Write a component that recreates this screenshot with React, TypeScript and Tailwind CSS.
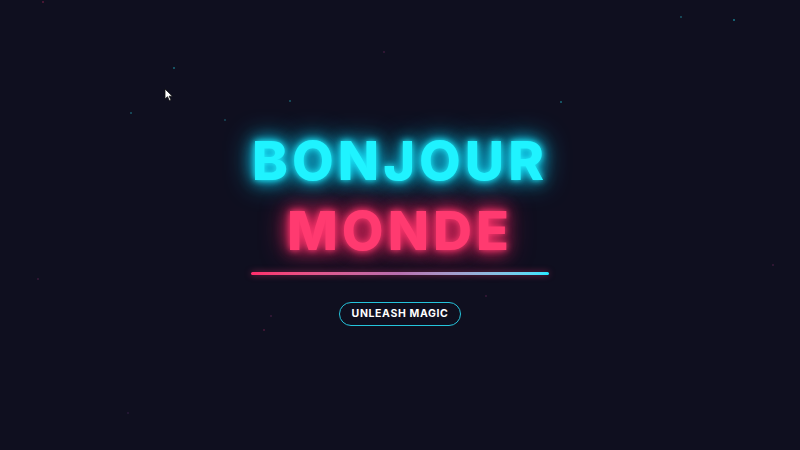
import React from 'react';

const stars = [
  { x: 42, y: 1, c: 'bg-[#5a1a3a]' },
  { x: 173, y: 67, c: 'bg-[#1a6a7a]' },
  { x: 130, y: 112, c: 'bg-[#1a5a6a]' },
  { x: 224, y: 119, c: 'bg-[#1a4a5a]' },
  { x: 289, y: 100, c: 'bg-[#1a5a6a]' },
  { x: 383, y: 51, c: 'bg-[#3a1a3a]' },
  { x: 560, y: 101, c: 'bg-[#1a6a7a]' },
  { x: 680, y: 16, c: 'bg-[#1a5a6a]' },
  { x: 733, y: 19, c: 'bg-[#1a7a8a]' },
  { x: 37, y: 278, c: 'bg-[#3a1a3a]' },
  { x: 270, y: 315, c: 'bg-[#3a1a3a]' },
  { x: 263, y: 329, c: 'bg-[#4a1a3a]' },
  { x: 485, y: 295, c: 'bg-[#3a1a3a]' },
  { x: 772, y: 264, c: 'bg-[#3a1a3a]' },
  { x: 127, y: 412, c: 'bg-[#2a1a3a]' },
];

export default function App() {
  return (
    <div className="relative w-[800px] h-[450px] overflow-hidden bg-[#0f0f1f] font-['Inter','Liberation_Sans',sans-serif]">
      {stars.map((s, i) => (
        <span
          key={i}
          className={`absolute w-[2px] h-[2px] rounded-full ${s.c}`}
          style={{ left: s.x, top: s.y }}
        />
      ))}

      <svg className="absolute left-[164px] top-[88px]" width="10" height="14" viewBox="0 0 10 14">
        <path d="M1 1 L1 11 L3.5 8.7 L5.4 12.8 L7 12 L5.2 8.2 L8.4 8.2 Z" fill="#fff" stroke="#111" strokeWidth="0.8" />
      </svg>

      <div className="flex flex-col items-center justify-center h-full pt-[2px]">
        <h1 className="text-center font-extrabold text-[54px] leading-[70px] tracking-[0.075em]">
          <span className="block text-[#1ff3ff] [text-shadow:0_0_6px_#1ff3ff,0_0_16px_#0bd8ff,0_0_28px_#0bb8e0]">
            BONJOUR
          </span>
          <span className="block text-[#ff3a70] [text-shadow:0_0_6px_#ff3a70,0_0_16px_#ff2a66,0_0_28px_#d81e58]">
            MONDE
          </span>
        </h1>
        <div className="mt-[6px] w-[298px] h-[3px] rounded-full bg-gradient-to-r from-[#ff2e6c] via-[#b86fb0] to-[#1ee8ff] shadow-[0_0_6px_rgba(255,60,120,0.5)]" />
        <button className="mt-[27px] h-[24px] px-[12px] rounded-full border-[1.5px] border-[#25c4dc] text-white text-[10.5px] font-bold tracking-[0.06em]">
          UNLEASH MAGIC
        </button>
      </div>
    </div>
  );
}
